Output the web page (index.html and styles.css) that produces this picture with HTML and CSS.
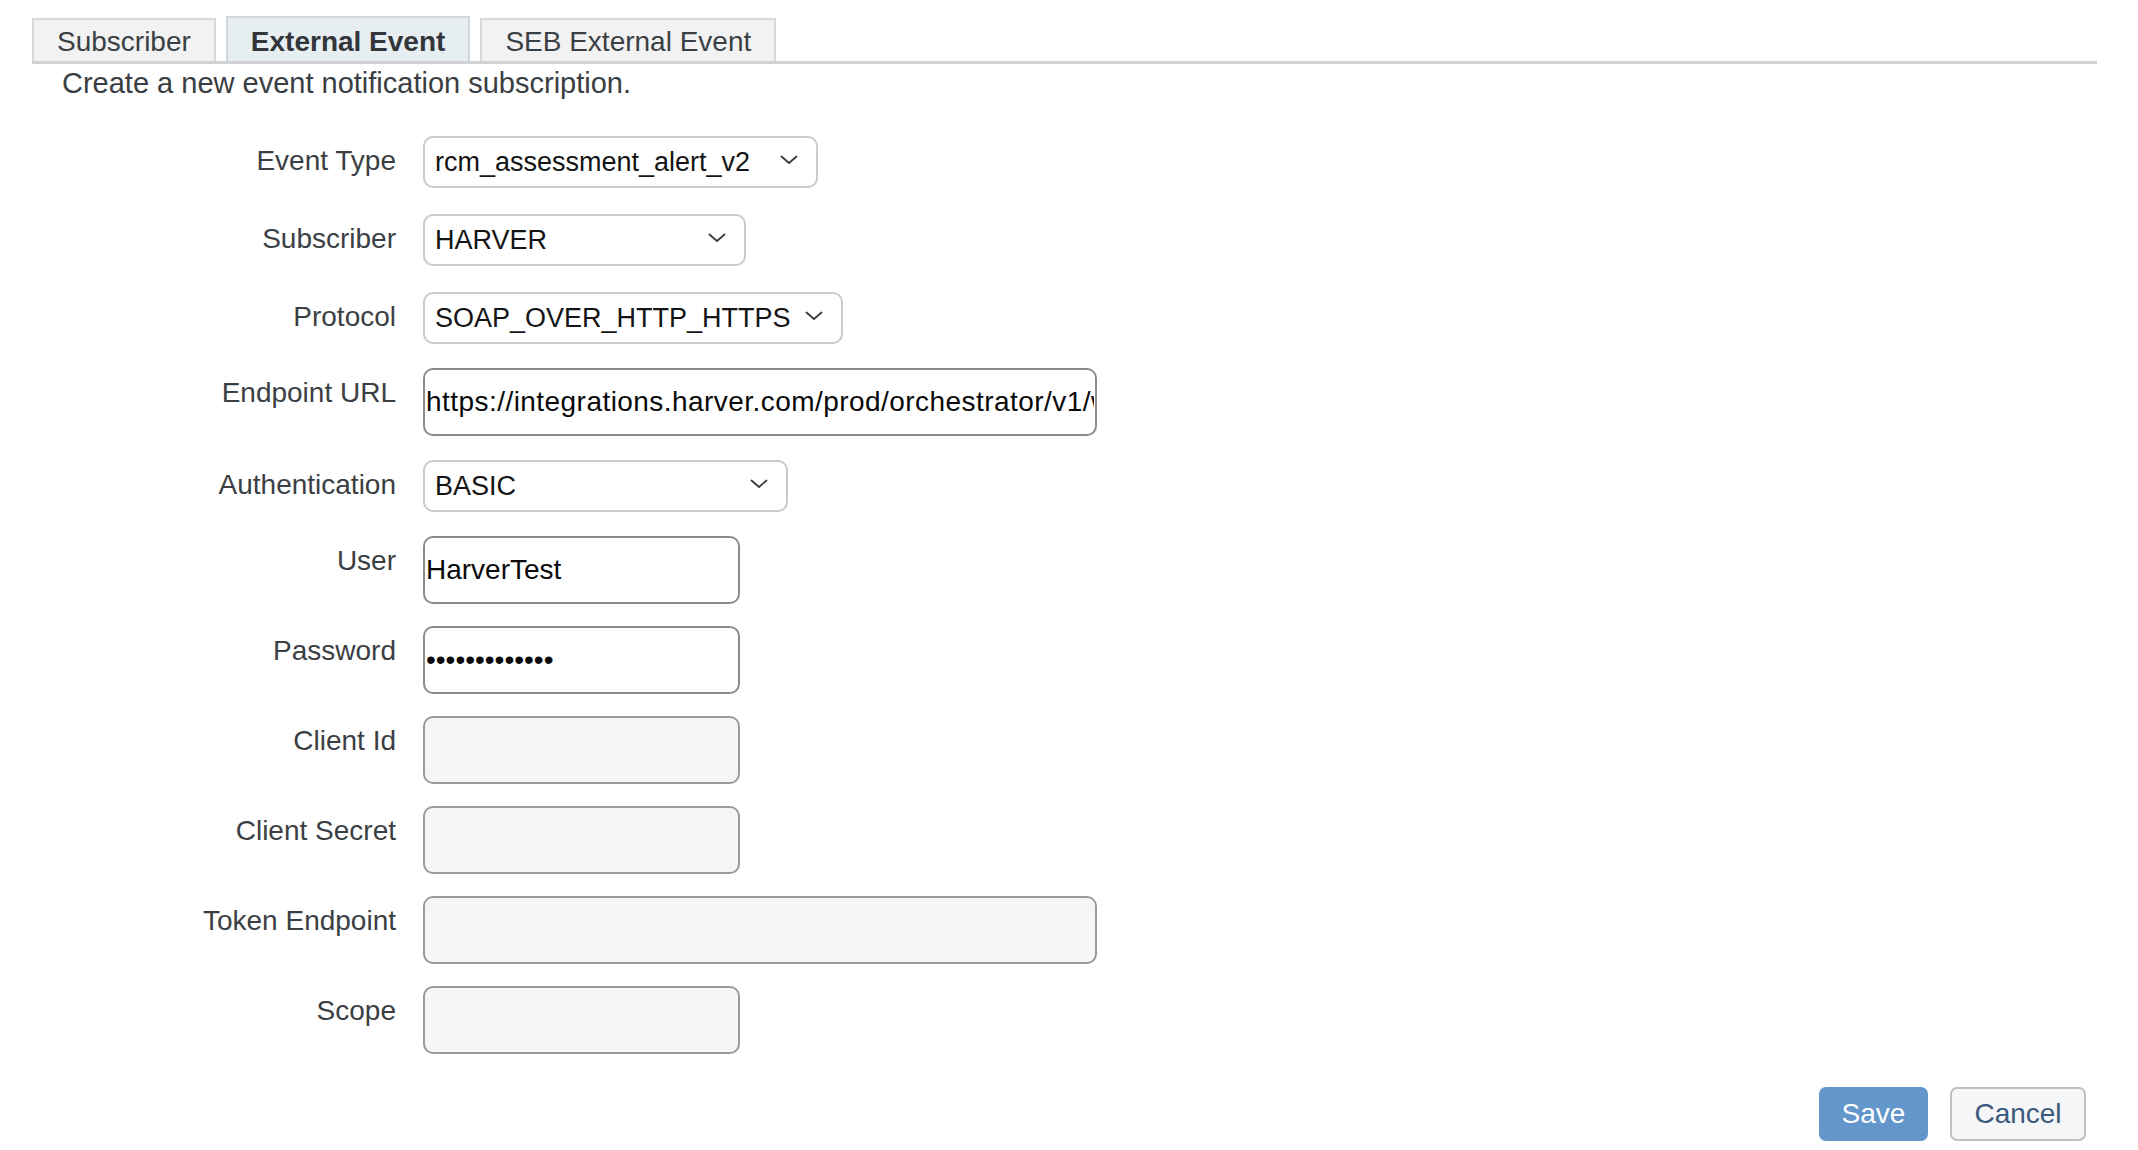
FILE: index.html
```html
<!DOCTYPE html>
<html lang="en">
<head>
<meta charset="utf-8">
<title>External Event</title>
<link rel="stylesheet" href="styles.css">
</head>
<body>
<div class="page">
  <div class="tabs">
    <div class="tab">Subscriber</div>
    <div class="tab tab--active">External Event</div>
    <div class="tab">SEB External Event</div>
  </div>
  <p class="desc">Create a new event notification subscription.</p>

  <form class="form">
    <div class="row row--select">
      <label class="label">Event Type</label>
      <div class="select select--event" role="combobox">
        <span class="select__value">rcm_assessment_alert_v2</span>
        <svg class="chev" width="18" height="10" viewBox="0 0 18 10"><path d="M1.5 1.5 L9 8 L16.5 1.5" fill="none" stroke="#3a3a3a" stroke-width="1.8" stroke-linecap="round" stroke-linejoin="round"/></svg>
      </div>
    </div>
    <div class="row row--select">
      <label class="label">Subscriber</label>
      <div class="select select--sub" role="combobox">
        <span class="select__value">HARVER</span>
        <svg class="chev" width="18" height="10" viewBox="0 0 18 10"><path d="M1.5 1.5 L9 8 L16.5 1.5" fill="none" stroke="#3a3a3a" stroke-width="1.8" stroke-linecap="round" stroke-linejoin="round"/></svg>
      </div>
    </div>
    <div class="row row--select">
      <label class="label">Protocol</label>
      <div class="select select--proto" role="combobox">
        <span class="select__value">SOAP_OVER_HTTP_HTTPS</span>
        <svg class="chev" width="18" height="10" viewBox="0 0 18 10"><path d="M1.5 1.5 L9 8 L16.5 1.5" fill="none" stroke="#3a3a3a" stroke-width="1.8" stroke-linecap="round" stroke-linejoin="round"/></svg>
      </div>
    </div>
    <div class="row">
      <label class="label">Endpoint URL</label>
      <input class="field field--wide field--url" type="text" value="https://integrations.harver.com/prod/orchestrator/v1/webhooks/events">
    </div>
    <div class="row row--select">
      <label class="label">Authentication</label>
      <div class="select select--auth" role="combobox">
        <span class="select__value">BASIC</span>
        <svg class="chev" width="18" height="10" viewBox="0 0 18 10"><path d="M1.5 1.5 L9 8 L16.5 1.5" fill="none" stroke="#3a3a3a" stroke-width="1.8" stroke-linecap="round" stroke-linejoin="round"/></svg>
      </div>
    </div>
    <div class="row">
      <label class="label">User</label>
      <input class="field" type="text" value="HarverTest">
    </div>
    <div class="row">
      <label class="label">Password</label>
      <input class="field" type="password" value="harverpass123">
    </div>
    <div class="row">
      <label class="label">Client Id</label>
      <input class="field field--empty" type="text" value="">
    </div>
    <div class="row">
      <label class="label">Client Secret</label>
      <input class="field field--empty" type="text" value="">
    </div>
    <div class="row">
      <label class="label">Token Endpoint</label>
      <input class="field field--wide field--empty" type="text" value="">
    </div>
    <div class="row">
      <label class="label">Scope</label>
      <input class="field field--empty" type="text" value="">
    </div>
  </form>

  <div class="actions">
    <button class="btn btn--primary" type="button">Save</button>
    <button class="btn btn--secondary" type="button">Cancel</button>
  </div>
</div>
</body>
</html>
```

FILE: styles.css
```css
html, body {
  margin: 0;
  padding: 0;
  background: #ffffff;
}

body {
  font-family: "Liberation Sans", Arial, sans-serif;
  color: #32363a;
  overflow: hidden;
}

.page {
  width: 2138px;
  height: 1150px;
}

/* Tabs */
.tabs {
  display: flex;
  align-items: flex-end;
  gap: 10px;
  margin: 0 41px 0 32px;
  padding-top: 16px;
  border-bottom: 3px solid #d3d3d3;
}

.tab {
  display: flex;
  align-items: center;
  box-sizing: border-box;
  height: 43px;
  padding: 2px 23px 0;
  border: 2px solid #d9d9d9;
  border-bottom: none;
  background: #f2f2f2;
  font-size: 28px;
  color: #3a3f44;
  white-space: nowrap;
}

.tab--active {
  height: 45px;
  padding-top: 4px;
  background: #e7eef2;
  border-color: #d2d8dc;
  font-weight: bold;
  color: #32363a;
}

.desc {
  margin: 1px 0 0 62px;
  font-size: 29px;
  line-height: 36px;
  color: #3a3e42;
}

/* Form */
.form {
  display: flex;
  flex-direction: column;
  gap: 22px;
  margin-top: 33px;
}

.row {
  display: flex;
  align-items: flex-start;
}

.row--select {
  padding: 2px 0;
}

.label {
  box-sizing: border-box;
  width: 396px;
  padding-top: 9px;
  text-align: right;
  font-size: 28px;
  line-height: 32px;
  color: #3b3f43;
  white-space: nowrap;
}

.label + * {
  margin-left: 27px;
}

.select {
  display: flex;
  align-items: center;
  box-sizing: border-box;
  height: 52px;
  padding: 1px 18px 0 10px;
  border: 2px solid #cacaca;
  border-radius: 10px;
  background: #ffffff;
  font-size: 27px;
  color: #141414;
}

.select__value {
  flex: 1;
  white-space: nowrap;
}

.chev {
  flex: none;
  margin-top: -5px;
}

.select--event { width: 395px; }
.select--sub { width: 323px; }
.select--proto { width: 420px; }
.select--auth { width: 365px; }

.field {
  box-sizing: border-box;
  width: 317px;
  height: 68px;
  padding: 0 1px;
  border: 2px solid #8c8c8c;
  border-radius: 10px;
  background: #ffffff;
  font-family: "Liberation Sans", Arial, sans-serif;
  font-size: 28px;
  color: #0a0a0a;
  outline: none;
}

.field--wide {
  width: 674px;
}

.field--url {
  letter-spacing: 0.45px;
}

.field--empty {
  background: #f6f6f6;
  border-color: #9a9a9a;
}

/* Actions */
.actions {
  display: flex;
  justify-content: flex-end;
  gap: 22px;
  margin-top: 33px;
  padding-right: 52px;
}

.btn {
  box-sizing: border-box;
  height: 54px;
  border-radius: 7px;
  font-family: "Liberation Sans", Arial, sans-serif;
  font-size: 28px;
  cursor: pointer;
}

.btn--primary {
  width: 109px;
  border: 2px solid #6396ca;
  background: #6396ca;
  color: #ffffff;
}

.btn--secondary {
  width: 136px;
  border: 2px solid #c0c0c0;
  background: #f5f6f7;
  color: #3c5a7c;
}
```
